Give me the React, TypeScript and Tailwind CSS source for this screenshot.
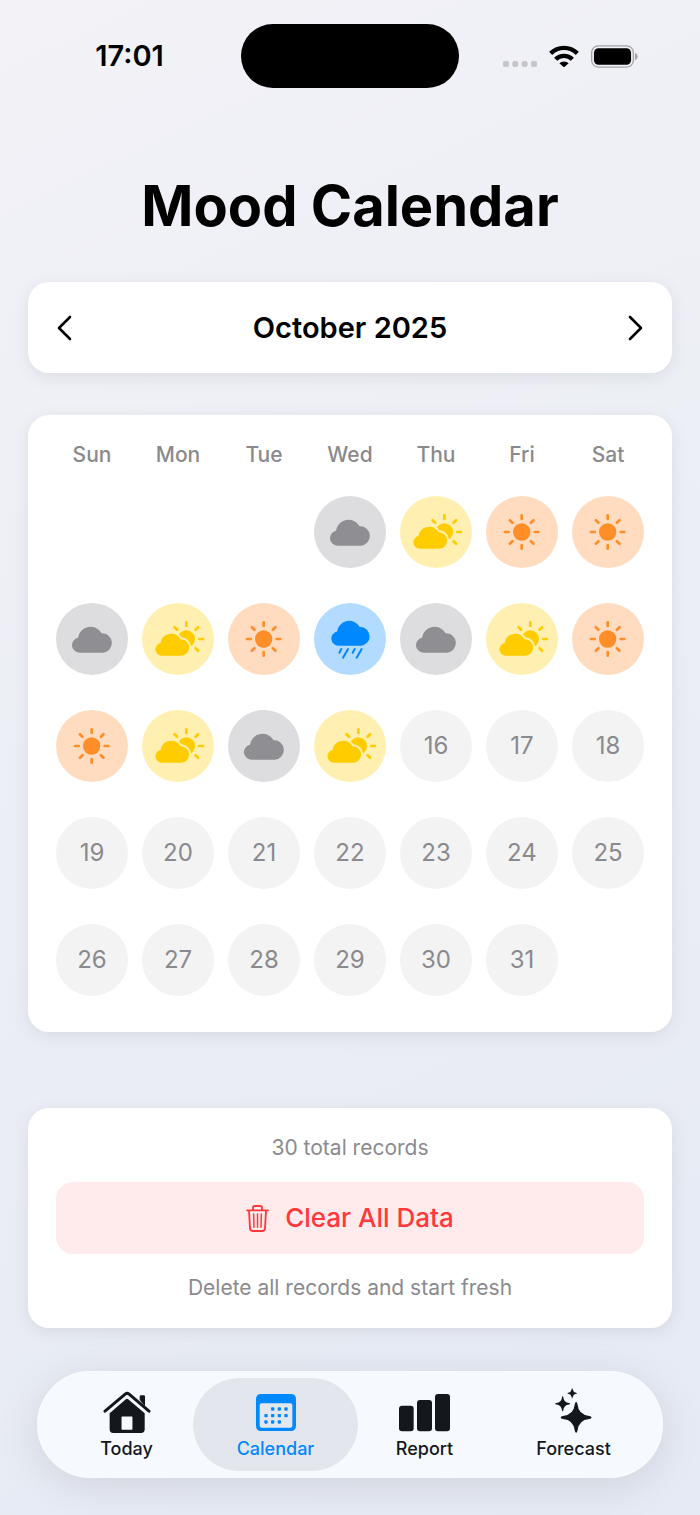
import { useState } from "react";
import type { ReactNode } from "react";
import { clsx } from "clsx";

type Mood = "sunny" | "partly" | "cloudy" | "rainy";

const WEEKDAYS = ["Sun", "Mon", "Tue", "Wed", "Thu", "Fri", "Sat"];
const FIRST_WEEKDAY = 3;
const DAYS_IN_MONTH = 31;

const MOODS: Mood[] = [
  "cloudy",
  "partly",
  "sunny",
  "sunny",
  "cloudy",
  "partly",
  "sunny",
  "rainy",
  "cloudy",
  "partly",
  "sunny",
  "sunny",
  "partly",
  "cloudy",
  "partly",
];

const MOOD_STYLES: Record<Mood, string> = {
  sunny: "bg-[#ffdcbf] text-[#ff8d28]",
  partly: "bg-[#fff0b2] text-[#ffcc00]",
  cloudy: "bg-[#dddddf] text-[#8e8e93]",
  rainy: "bg-[#b2dbff] text-[#0088ff]",
};

const SUN_RAYS = [0, 45, 90, 135, 180, 225, 270, 315];

function Sun({ cx, cy, rays }: { cx: number; cy: number; rays: number[] }) {
  return (
    <>
      <circle cx={cx} cy={cy} r="26" />
      {rays.map((angle) => (
        <line
          key={angle}
          x1={cx}
          x2={cx}
          y1={cy - 39}
          y2={cy - 50}
          stroke="currentColor"
          strokeWidth="8"
          strokeLinecap="round"
          transform={`rotate(${angle} ${cx} ${cy})`}
        />
      ))}
    </>
  );
}

const CLOUD = "M70 149a23 22.500 0 0 1-4-44.500A38 38 0 0 1 137 91a29 29 0 0 1 3 58Z";

function MoodIcon({ mood }: { mood: Mood }) {
  return (
    <svg viewBox="0 0 216 216" fill="currentColor" className="size-full" aria-hidden="true">
      {mood === "sunny" && <Sun cx={107} cy={108} rays={SUN_RAYS} />}
      {mood === "cloudy" && <path d={CLOUD} />}
      {mood === "partly" && (
        <>
          <Sun cx={133} cy={108} rays={[0, 45, 90, 135, 315]} />
          <path
            d={CLOUD}
            transform="translate(0 32) scale(0.845)"
            stroke="#fff0b2"
            strokeWidth="14"
            paintOrder="stroke"
          />
        </>
      )}
      {mood === "rainy" && (
        <>
          <path d={CLOUD} transform="translate(6 -15) scale(0.960)" />
          <path
            d="M82 138l-6 11M102 138l-15 26M122 138l-6 11M143 138l-15 26"
            stroke="currentColor"
            strokeWidth="6"
            strokeLinecap="round"
          />
        </>
      )}
    </svg>
  );
}

function StatusBar() {
  return (
    <header className="flex pt-6">
      <div className="flex flex-1 items-center justify-center pl-[18px] text-[29px] leading-10 font-semibold">17:01</div>
      <div className="h-16 w-[218px] rounded-full bg-black" />
      <div className="flex flex-1 items-center justify-center gap-3 pr-[18px]">
        <svg viewBox="0 0 34 22" className="h-[22px] w-[34px] fill-[#c4c4c9]" aria-hidden="true">
          <rect x="0" y="16" width="6" height="6" rx="2" />
          <rect x="9.300" y="16" width="6" height="6" rx="2" />
          <rect x="18.600" y="16" width="6" height="6" rx="2" />
          <rect x="28" y="16" width="6" height="6" rx="2" />
        </svg>
        <svg viewBox="0 0 90 66" className="h-[22px] w-[30px]" fill="none" stroke="#000" strokeWidth="13" aria-hidden="true">
          <path d="M5 25a57 57 0 0 1 80 0" />
          <path d="M20 43a35 35 0 0 1 50 0" />
          <path d="M31 55a20 20 0 0 1 28 0L47 65q-2 2-4 0Z" fill="#000" stroke="none" />
        </svg>
        <svg viewBox="0 0 142 68" className="h-[23px] w-[47px]" aria-hidden="true">
          <rect x="2" y="2" width="126" height="64" rx="20" fill="none" stroke="#a3a3a7" strokeWidth="4" />
          <rect x="9" y="9" width="112" height="50" rx="14" />
          <path d="M133 23q8 3 8 11t-8 11Z" fill="#a3a3a7" />
        </svg>
      </div>
    </header>
  );
}

function Chevron({ d }: { d: string }) {
  return (
    <svg
      viewBox="0 0 16 28"
      className="h-7 w-4"
      fill="none"
      stroke="currentColor"
      strokeWidth="2.600"
      strokeLinecap="round"
      strokeLinejoin="round"
      aria-hidden="true"
    >
      <path d={d} />
    </svg>
  );
}

function DayCell({ day }: { day: number }) {
  if (day < 1 || day > DAYS_IN_MONTH) return null;
  const mood = MOODS[day - 1];

  return (
    <button
      type="button"
      aria-label={mood ? `October ${day}, ${mood}` : undefined}
      className={clsx(
        "mx-auto flex size-[72px] items-center justify-center rounded-full text-2xl",
        mood ? MOOD_STYLES[mood] : "bg-[#f3f3f4] text-[#8a8a8e]",
      )}
    >
      {mood ? <MoodIcon mood={mood} /> : day}
    </button>
  );
}

function TrashIcon() {
  return (
    <svg
      viewBox="0 0 69 81"
      className="h-[27px] w-[23px]"
      fill="none"
      stroke="currentColor"
      strokeWidth="5.500"
      strokeLinecap="round"
      strokeLinejoin="round"
      aria-hidden="true"
    >
      <path d="M3 16h63M9 16l3 54q0 8 8 8h29q8 0 8-8l3-54M21 15V8q0-5 5-5h17q5 0 5 5v7" />
      <path d="M23 27l1 40M34.500 27v40M46 27l-1 40" strokeWidth="4.500" />
    </svg>
  );
}

const TABS: { name: string; icon: ReactNode }[] = [
  {
    name: "Today",
    icon: (
      <svg viewBox="218 94 143 127" className="h-[42px] w-12" fill="currentColor" aria-hidden="true">
        <path
          d="M223 155l62-52q5-4 10 0l61 52"
          fill="none"
          stroke="currentColor"
          strokeWidth="9"
          strokeLinecap="round"
          strokeLinejoin="round"
        />
        <path d="M328 121v-10q0-4 4-4h8q4 0 4 4v30Z" />
        <path
          fillRule="evenodd"
          d="M286 119q3-3 7 0l50 42v49q0 11-11 11h-84q-11 0-11-11v-49ZM275 171q-2 0-2 2v36q0 2 2 2h29q2 0 2-2v-36q0-2-2-2Z"
        />
      </svg>
    ),
  },
  {
    name: "Calendar",
    icon: (
      <svg viewBox="676 101 120 117" className="h-[39px] w-10" fill="currentColor" aria-hidden="true">
        <path
          fillRule="evenodd"
          d="M692 101h88q16 0 16 16v79q0 16-16 16h-88q-16 0-16-16v-79q0-16 16-16ZM693 129q-6 0-6 6v61q0 6 6 6h86q6 0 6-6v-61q0-6-6-6Z"
        />
        {[
          [726, 146], [746, 146], [766, 146],
          [706, 166], [726, 166], [746, 166], [766, 166],
          [706, 185], [726, 185], [746, 185],
        ].map(([x, y]) => (
          <rect key={`${x}-${y}`} x={x - 5} y={y - 5} width="10" height="10" rx="2.500" />
        ))}
      </svg>
    ),
  },
  {
    name: "Report",
    icon: (
      <svg viewBox="147 101 153 117" className="h-[39px] w-[51px]" fill="currentColor" aria-hidden="true">
        <rect x="147" y="136" width="44" height="77" rx="9" />
        <rect x="201" y="119" width="45" height="94" rx="9" />
        <rect x="255" y="101" width="45" height="112" rx="9" />
      </svg>
    ),
  },
  {
    name: "Forecast",
    icon: (
      <svg viewBox="611 84 124 137" className="h-[45px] w-[41px]" fill="currentColor" aria-hidden="true">
        <path d="M681 127q3 0 4 6 3 33 36 36 7 1 7 4.500t-7 4.500q-33 3-36 36-1 6-4 6t-4-6q-3-33-36-36-7-1-7-4.500t7-4.500q33-3 36-36 1-6 4-6Z" />
        <path d="M640 109q2 0 2 4 2 15 17 17 4 0 4 2t-4 2q-15 2-17 17 0 4-2 4t-2-4q-2-15-17-17-4 0-4-2t4-2q15-2 17-17 0-4 2-4Z" />
        <path d="M669 85q1.500 0 1.500 3 1.500 9 10.500 10.500 3 0 3 1.500t-3 1.500q-9 1.500-10.500 10.500 0 3-1.500 3t-1.500-3q-1.500-9-10.500-10.500-3 0-3-1.500t3-1.500q9-1.500 10.500-10.500 0-3 1.500-3Z" />
      </svg>
    ),
  },
];

function TabBar() {
  const [active, setActive] = useState("Calendar");

  return (
    <nav className="mx-[37px] mt-[43px] flex rounded-[54px] bg-[#f6faff] px-[15px] py-[7px] shadow-[0_8px_44px_rgba(0,0,0,0.1),inset_0_0_2px_#ffffff]">
      {TABS.map((tab) => (
        <div key={tab.name} className="flex-1">
          <div className="-mx-2">
            <button
              type="button"
              onClick={() => setActive(tab.name)}
              aria-current={active === tab.name ? "page" : undefined}
              className={clsx(
                "flex h-[93px] w-full flex-col items-center justify-end gap-1 rounded-full pb-2.5",
                active === tab.name ? "bg-[#e3e7ed] text-[#0088ff]" : "text-[#14181d]",
              )}
            >
              <span className="flex h-[45px] items-end">{tab.icon}</span>
              <span className="text-[18px] leading-6 font-medium">{tab.name}</span>
            </button>
          </div>
        </div>
      ))}
    </nav>
  );
}

const CARD = "mx-7 rounded-[21px] bg-white shadow-[0_4px_18px_rgba(0,0,0,0.08)]";

export default function App() {
  const weeks = Array.from({ length: 5 }, (_, week) =>
    WEEKDAYS.map((_, weekday) => week * 7 + weekday - FIRST_WEEKDAY + 1),
  );

  return (
    <div className="min-h-screen bg-[linear-gradient(155deg,#f2f2f7,#e5eaf4)] pb-[37px] font-[Inter,sans-serif] text-black">
      <StatusBar />
      <main>
        <h1 className="mt-[82px] text-center text-[56px] leading-[72px] font-bold">Mood Calendar</h1>

        <section className={clsx(CARD, "mt-10 flex h-[91px] items-center justify-between px-7")}>
          <button type="button" aria-label="Previous month">
            <Chevron d="M14 3L3 14l11 11" />
          </button>
          <h2 className="text-[29px] leading-10 font-semibold">October 2025</h2>
          <button type="button" aria-label="Next month">
            <Chevron d="M2 3l11 11L2 25" />
          </button>
        </section>

        <section className={clsx(CARD, "mt-[42px] px-[21px] pt-4 pb-[19px]")}>
          <table className="w-full table-fixed">
            <thead>
              <tr className="h-[47px]">
                {WEEKDAYS.map((name) => (
                  <th key={name} scope="col" className="p-0 text-[21px] font-medium text-[#8a8a8e]">
                    {name}
                  </th>
                ))}
              </tr>
            </thead>
            <tbody>
              {weeks.map((days) => (
                <tr key={days[0]} className="h-[107px]">
                  {days.map((day) => (
                    <td key={day} className="p-0">
                      <DayCell day={day} />
                    </td>
                  ))}
                </tr>
              ))}
            </tbody>
          </table>
        </section>

        <section className={clsx(CARD, "mt-[76px] px-7 py-6 text-center text-[21px] leading-8 text-[#8a8a8e]")}>
          <p>30 total records</p>
          <button
            type="button"
            className="my-[18px] flex h-[72px] w-full items-center justify-center gap-4 rounded-[17px] bg-[#ffebec] text-[26px] font-medium text-[#ff383c]"
          >
            <TrashIcon />
            Clear All Data
          </button>
          <p>Delete all records and start fresh</p>
        </section>
      </main>
      <TabBar />
    </div>
  );
}
